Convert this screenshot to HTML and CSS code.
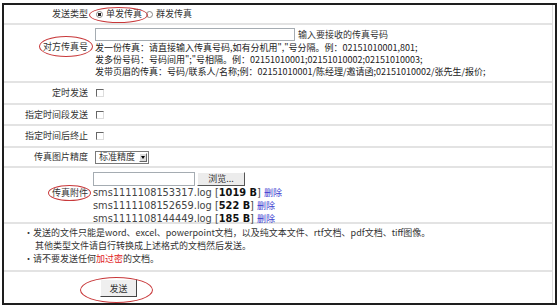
FILE: index.html
```html
<!DOCTYPE html>
<html lang="zh-CN">
<head>
  <meta charset="UTF-8">
  <title>发送传真</title>
  <link rel="stylesheet" href="styles.css">
</head>
<body>
<div class="fax-form">
  <div class="fax-inner">

    <!-- 发送类型 -->
    <div class="row row-type">
      <div class="label">发送类型</div>
      <div class="value">
        <label class="radio-item marked mark-radio"><input type="radio" name="sendType" checked>单发传真</label>
        <label class="radio-item"><input type="radio" name="sendType">群发传真</label>
      </div>
    </div>

    <!-- 对方传真号 -->
    <div class="row row-number">
      <div class="label"><span class="marked mark-number">对方传真号</span></div>
      <div class="value block">
        <div class="number-line">
          <input type="text" class="text-input number-input">
          <span class="inline-hint">输入要接收的传真号码</span>
        </div>
        <div class="hint">发一份传真：请直接输入传真号码,如有分机用","号分隔。例：02151010001,801;</div>
        <div class="hint">发多份号码：号码间用";"号相隔。例：02151010001;02151010002;02151010003;</div>
        <div class="hint">发带页眉的传真：号码/联系人/名称;例：02151010001/陈经理/邀请函;02151010002/张先生/报价;</div>
      </div>
    </div>

    <div class="row row-check">
      <div class="label">定时发送</div>
      <div class="value"><input type="checkbox" class="check"></div>
    </div>

    <div class="row row-check row-short">
      <div class="label">指定时间段发送</div>
      <div class="value"><input type="checkbox" class="check"></div>
    </div>

    <div class="row row-check">
      <div class="label">指定时间后终止</div>
      <div class="value"><input type="checkbox" class="check"></div>
    </div>

    <!-- 传真图片精度 -->
    <div class="row row-quality">
      <div class="label">传真图片精度</div>
      <div class="value">
        <span class="select">标准精度<span class="select-arrow"></span></span>
      </div>
    </div>

    <!-- 传真附件 -->
    <div class="row row-attach">
      <div class="label"><span class="marked mark-attach">传真附件</span></div>
      <div class="value block">
        <div class="file-line">
          <input type="text" class="text-input file-input" readonly>
          <button type="button" class="browse">浏览...</button>
        </div>
        <div class="file-item">sms1111108153317.log [<b>1019 B</b>] <a href="#" class="del">删除</a></div>
        <div class="file-item">sms1111108152659.log [<b>522 B</b>] <a href="#" class="del">删除</a></div>
        <div class="file-item">sms1111108144449.log [<b>185 B</b>] <a href="#" class="del">删除</a></div>
      </div>
    </div>

    <!-- 说明 -->
    <div class="row notes">
      <ul>
        <li>发送的文件只能是word、excel、powerpoint文档，以及纯文本文件、rtf文档、pdf文档、tiff图像。<br><span class="indent">其他类型文件请自行转换成上述格式的文档然后发送。</span></li>
        <li>请不要发送任何<span class="warn">加过密</span>的文档。</li>
      </ul>
    </div>

    <div class="row-submit">
      <button type="submit" class="send-btn marked mark-send">发送</button>
    </div>

  </div>
</div>
</body>
</html>
```

FILE: styles.css
```css
body {
  margin: 0;
  font-family: "Noto Sans CJK SC", "DejaVu Sans", sans-serif;
  font-size: 9px;
  color: #333;
  background: #fff;
}
.fax-form {
  margin: 3px 3px 2px 2px;
  border: 2px solid #1e1e1e;
}
.fax-inner {
  margin-right: 2px;
  border-right: 1px solid #ddd;
}
.row {
  display: grid;
  grid-template-columns: 84px 1fr;
  column-gap: 5px;
  border-bottom: 2px solid #e3e3e3;
  box-sizing: border-box;
}
.label {
  text-align: right;
  align-self: center;
  line-height: 12px;
}
.value {
  align-self: center;
  display: flex;
  align-items: center;
  line-height: 12px;
}
.value.block {
  display: block;
  align-self: start;
}
.row-type { height: 20px; }
.row-number { height: 58px; }
.row-check { height: 22px; }
.row-short { height: 21px; }
.row-quality { height: 20px; }
.row-attach { height: 56px; }

/* radios */
.radio-item {
  display: inline-flex;
  align-items: center;
  margin-right: 4px;
}
.radio-item:first-child {
  margin-left: 3px;
}
.radio-item input {
  appearance: none;
  width: 7px;
  height: 7px;
  margin: 0 3px 0 0;
  border: 1px solid #888;
  border-radius: 50%;
  background: #fff;
  box-sizing: border-box;
}
.radio-item input:checked {
  background: radial-gradient(circle, #222 0 1.5px, #fff 2px);
}

/* red circled marks */
.marked {
  position: relative;
}
.marked::after {
  content: "";
  position: absolute;
  border: 1px solid #c8383a;
  border-radius: 50%;
}
.mark-radio::after { left: -7px; right: -6px; top: -1px; bottom: -3px; }
.mark-number::after { left: -4px; right: -5px; top: -4px; bottom: -4px; }
.mark-attach::after { left: -4px; right: -3px; top: -1px; bottom: -2px; }
.mark-send::after { left: -21px; right: -17px; top: -3px; bottom: -7px; }

/* fax number */
.row-number .label {
  align-self: start;
  padding-top: 16px;
}
.row-number .value {
  padding-top: 3px;
}
.number-line {
  display: flex;
  align-items: center;
  height: 13px;
  margin-bottom: 1px;
}
.text-input {
  box-sizing: border-box;
  border: 1px solid #a5acb2;
  padding: 0;
  margin: 0;
  background: #fff;
}
.number-input {
  width: 200px;
  height: 13px;
  margin-left: 2px;
}
.inline-hint {
  margin-left: 3px;
}
.hint {
  margin-left: 2px;
  color: #222;
  white-space: nowrap;
}

/* checkboxes */
.check {
  appearance: none;
  width: 8px;
  height: 8px;
  margin: 0 0 0 3px;
  border: 1px solid;
  border-color: #666 #ddd #ddd #666;
  background: #fff;
}

/* select */
.select {
  display: inline-flex;
  align-items: center;
  box-sizing: border-box;
  height: 13px;
  margin-left: 2px;
  padding-left: 3px;
  border: 1px solid #7a7a7a;
  background: #fff;
}
.select-arrow {
  position: relative;
  width: 8px;
  height: 9px;
  margin: 0 1px 0 4px;
  background: #ddd;
  border: 1px solid;
  border-color: #fff #666 #666 #fff;
  box-sizing: border-box;
}
.select-arrow::after {
  content: "";
  position: absolute;
  left: 1px;
  top: 2px;
  border-left: 2px solid transparent;
  border-right: 2px solid transparent;
  border-top: 3px solid #000;
}

/* attachments */
.row-attach .label {
  align-self: start;
  padding-top: 18px;
  line-height: 13px;
}
.row-attach .value {
  padding-top: 4px;
}
.file-line {
  display: flex;
  align-items: center;
  height: 14px;
}
.file-input {
  width: 102px;
  height: 14px;
}
.browse {
  width: 48px;
  height: 14px;
  margin-left: 2px;
  padding: 0;
  font-family: inherit;
  font-size: 9px;
  line-height: 12px;
  color: #333;
  background: #ececec;
  border: 1px solid;
  border-color: #fff #555 #555 #fff;
}
.file-item {
  font-family: "DejaVu Sans", sans-serif;
  font-size: 9.8px;
  line-height: 13px;
  color: #444;
  white-space: nowrap;
}
.file-item b {
  color: #111;
}
.del {
  font-family: "Noto Sans CJK SC", sans-serif;
  font-size: 9px;
  color: #3b3bd0;
  text-decoration: none;
}

/* notes */
.notes {
  display: block;
  height: 48px;
  padding-top: 2px;
}
.notes ul {
  list-style: none;
  margin: 0;
  padding: 0 0 0 29px;
}
.notes li {
  position: relative;
  line-height: 13px;
}
.notes li::before {
  content: "•";
  position: absolute;
  left: -9px;
}
.indent {
  padding-left: 2px;
}
.warn {
  color: #e02020;
}

/* submit */
.row-submit {
  height: 31px;
  padding-left: 96px;
  padding-top: 7px;
  box-sizing: border-box;
}
.send-btn {
  width: 37px;
  height: 18px;
  padding: 0;
  font-family: inherit;
  font-size: 9px;
  color: #333;
  background: #efefef;
  border: 1px solid;
  border-color: #fff #444 #444 #fff;
}
```
